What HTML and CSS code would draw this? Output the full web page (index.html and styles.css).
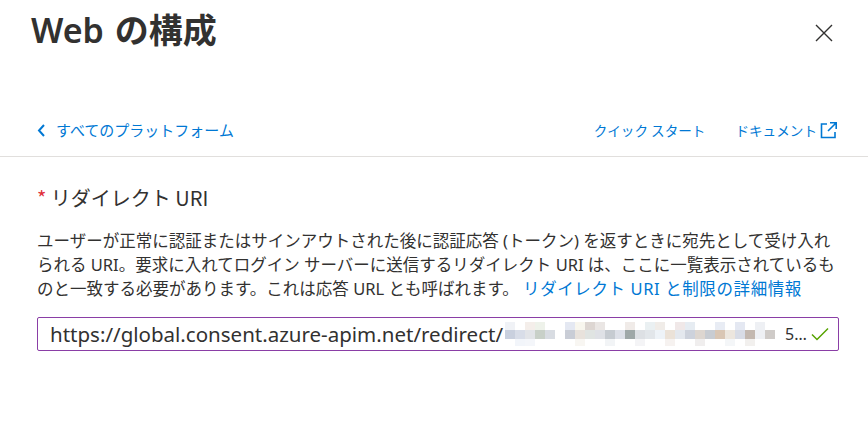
FILE: index.html
```html
<!DOCTYPE html>
<html lang="ja">
<head>
<meta charset="utf-8">
<link rel="stylesheet" href="styles.css">
</head>
<body>
<div class="panel">
  <div class="titlebar">
    <h1 class="title">Web の構成</h1>
    <button class="close" aria-label="閉じる">
      <svg width="20" height="20" viewBox="0 0 20 20"><path d="M2 2 L18 18 M18 2 L2 18" stroke="#323130" stroke-width="1.4" fill="none"/></svg>
    </button>
  </div>
  <div class="navrow">
    <a class="back link">
      <svg width="9" height="13" viewBox="0 0 9 13"><path d="M7 1 L2 6.5 L7 12" stroke="#0078d4" stroke-width="2" fill="none"/></svg>
      <span>すべてのプラットフォーム</span>
    </a>
    <div class="navlinks">
      <a class="link">クイック スタート</a>
      <a class="link doc">ドキュメント<svg width="19" height="19" viewBox="0 0 19 19"><path d="M8 3 H2.5 V16.5 H16 V11" stroke="#0078d4" stroke-width="1.6" fill="none"/><path d="M9 10 L17 2 M11 1.8 H17.2 V8" stroke="#0078d4" stroke-width="1.6" fill="none"/></svg></a>
    </div>
  </div>
  <div class="content">
    <div class="label"><span class="req">*</span> リダイレクト URI</div>
    <p class="desc">ユーザーが正常に認証またはサインアウトされた後に認証応答 (トークン) を返すときに宛先として受け入れ<br>られる URI。要求に入れてログイン サーバーに送信するリダイレクト URI は、ここに一覧表示されているも<br>のと一致する必要があります。これは応答 URL とも呼ばれます。 <a class="link more">リダイレクト URI と制限の詳細情報</a></p>
    <div class="input">
      <span class="url">https://global.consent.azure-apim.net/redirect/</span>
      <svg class="mosaic" width="280" height="24" viewBox="0 0 280 24">
        <g>
          <rect x="0" y="0" width="10" height="8" fill="#f0f2f6"/>
          <rect x="20" y="0" width="10" height="8" fill="#f4eeea"/>
          <rect x="30" y="0" width="10" height="8" fill="#eef2ea"/>
          <rect x="60" y="0" width="10" height="8" fill="#e4e8f2"/>
          <rect x="70" y="0" width="10" height="8" fill="#f8f6ee"/>
          <rect x="80" y="0" width="10" height="8" fill="#ddd6d2"/>
          <rect x="90" y="0" width="10" height="8" fill="#eae6e4"/>
          <rect x="120" y="0" width="10" height="8" fill="#f0ebe8"/>
          <rect x="140" y="0" width="10" height="8" fill="#eaf0f2"/>
          <rect x="150" y="0" width="10" height="8" fill="#f0ece8"/>
          <rect x="170" y="0" width="10" height="8" fill="#f0e8e8"/>
          <rect x="180" y="0" width="10" height="8" fill="#e6ecf2"/>
          <rect x="210" y="0" width="10" height="8" fill="#e8ecf4"/>
          <rect x="230" y="0" width="10" height="8" fill="#e4e8f2"/>
          <rect x="250" y="0" width="10" height="8" fill="#eef0f4"/>
        </g>
        <g>
          <rect x="0" y="8" width="10" height="9" fill="#c9d0de"/>
          <rect x="10" y="8" width="10" height="9" fill="#d8dde8"/>
          <rect x="20" y="8" width="10" height="9" fill="#e2e4e8"/>
          <rect x="30" y="8" width="10" height="9" fill="#c8d0c8"/>
          <rect x="40" y="8" width="10" height="9" fill="#d8dce2"/>
          <rect x="60" y="8" width="10" height="9" fill="#c9cdd6"/>
          <rect x="70" y="8" width="10" height="9" fill="#e8e2dc"/>
          <rect x="80" y="8" width="10" height="9" fill="#e0e4e2"/>
          <rect x="90" y="8" width="10" height="9" fill="#dfe1e6"/>
          <rect x="100" y="8" width="10" height="9" fill="#c6cbd1"/>
          <rect x="110" y="8" width="10" height="9" fill="#dde0e8"/>
          <rect x="120" y="8" width="10" height="9" fill="#9fa8a8"/>
          <rect x="130" y="8" width="10" height="9" fill="#dde0e4"/>
          <rect x="140" y="8" width="10" height="9" fill="#e2e6ea"/>
          <rect x="150" y="8" width="10" height="9" fill="#eef3f8"/>
          <rect x="160" y="8" width="10" height="9" fill="#ebe2d8"/>
          <rect x="170" y="8" width="10" height="9" fill="#e4e8ee"/>
          <rect x="180" y="8" width="10" height="9" fill="#cdd2dc"/>
          <rect x="190" y="8" width="10" height="9" fill="#ddd6d0"/>
          <rect x="200" y="8" width="10" height="9" fill="#c8ccd2"/>
          <rect x="210" y="8" width="10" height="9" fill="#d9c6b4"/>
          <rect x="220" y="8" width="10" height="9" fill="#ece6de"/>
          <rect x="230" y="8" width="10" height="9" fill="#d8dce6"/>
          <rect x="240" y="8" width="10" height="9" fill="#c3b8b0"/>
          <rect x="250" y="8" width="10" height="9" fill="#eef0f4"/>
          <rect x="260" y="8" width="10" height="9" fill="#cfcbc8"/>
        </g>
        <g>
          <rect x="10" y="17" width="10" height="7" fill="#f2f5fa"/>
          <rect x="20" y="17" width="10" height="7" fill="#f4f6fa"/>
          <rect x="70" y="17" width="10" height="7" fill="#f8f6f2"/>
          <rect x="100" y="17" width="10" height="7" fill="#f2f4f6"/>
          <rect x="130" y="17" width="10" height="7" fill="#f4f4f6"/>
          <rect x="160" y="17" width="10" height="7" fill="#f6f2f0"/>
          <rect x="190" y="17" width="10" height="7" fill="#f0eeee"/>
          <rect x="220" y="17" width="10" height="7" fill="#f4f6f8"/>
          <rect x="240" y="17" width="10" height="7" fill="#f2f0ee"/>
        </g>
      </svg>
      <span class="url tail">5…</span>
      <svg class="check" width="18" height="14" viewBox="0 0 18 14"><path d="M1 7.5 L6 12.5 L17 1.5" stroke="#57a300" stroke-width="1.5" fill="none"/></svg>
    </div>
  </div>
</div>
</body>
</html>
```
FILE: styles.css
```css
* { box-sizing: border-box; }
html, body { margin: 0; padding: 0; background: #fff; }
body {
  font-family: "Noto Sans CJK JP", "Noto Sans", sans-serif;
  color: #323130;
  width: 868px;
  height: 421px;
  overflow: hidden;
}
.panel { width: 868px; }
.titlebar {
  height: 60px;
  display: flex;
  align-items: center;
  justify-content: space-between;
  padding: 0 34px 0 31px;
}
.title {
  margin: 0;
  font-family: "Noto Sans", "Noto Sans CJK JP", sans-serif;
  font-size: 34px;
  font-weight: 600;
  line-height: 40px;
  word-spacing: 2px;
}
.close {
  border: 0;
  background: transparent;
  padding: 0;
  width: 20px;
  height: 20px;
  margin-top: 6px;
}
.close svg { display: block; }
.navrow {
  height: 97px;
  display: flex;
  align-items: flex-end;
  justify-content: space-between;
  padding: 0 30px 16px 37px;
  border-bottom: 1px solid #e1dfdd;
}
.link { color: #0078d4; text-decoration: none; }
.back {
  display: flex;
  align-items: center;
  gap: 10px;
  font-size: 15px;
  line-height: 20px;
}
.back svg { display: block; }
.navlinks {
  display: flex;
  align-items: center;
  gap: 30px;
  font-size: 13.6px;
  line-height: 20px;
}
.doc { display: flex; align-items: center; gap: 2px; }
.doc svg { display: block; }
.content { padding: 28px 29px 0 37px; }
.label {
  font-size: 20px;
  line-height: 26px;
}
.req { color: #e0303a; }
.desc {
  margin: 18px 0 0;
  font-family: "Noto Sans", "Noto Sans CJK JP", sans-serif;
  font-size: 16.5px;
  line-height: 24px;
  white-space: nowrap;
}
.more { letter-spacing: 0.6px; }
.input {
  margin-top: 16px;
  height: 34px;
  border: 1px solid #8a3ea6;
  border-radius: 2px;
  display: flex;
  align-items: center;
  padding: 0 9px 0 12px;
}
.url {
  font-family: "Noto Sans", sans-serif;
  font-size: 20.5px;
  line-height: 26px;
  white-space: nowrap;
}
.mosaic { display: block; flex: none; margin-left: 2px; }
.tail { font-size: 16px; }
.check { margin-left: auto; display: block; }
```
